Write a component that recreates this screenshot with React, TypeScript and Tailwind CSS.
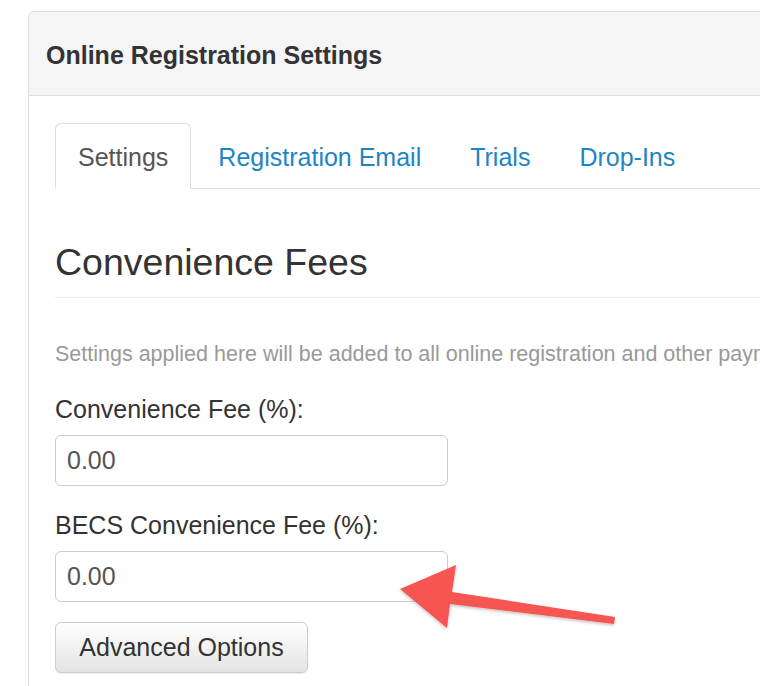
export default function App() {
  const tabs = ['Registration Email', 'Trials', 'Drop-Ins'];

  return (
    <div className="relative w-[760px] h-[686px] overflow-hidden bg-white font-['Liberation_Sans',Helvetica,Arial,sans-serif]">
      <div className="pt-[11px] pl-[28px]">
        <div className="w-[820px] border border-[#dddddd] rounded-tl-[6px]">
          {/* Panel heading */}
          <div className="h-[84px] bg-[#f5f5f5] border-b border-[#dddddd] rounded-tl-[6px] flex items-center px-[17px] pt-[3px]">
            <h1 className="text-[25px] font-bold text-[#333333] leading-none">Online Registration Settings</h1>
          </div>

          {/* Panel body */}
          <div className="pl-[26px] pt-[27px] pb-[40px]">
            <ul className="flex border-b border-[#dddddd]">
              <li className="mr-[4px] -mb-px">
                <span className="h-[66px] flex items-center pt-[3px] px-[22px] border border-[#dddddd] border-b-white bg-white rounded-t-[6px] text-[25px] text-[#555555]">
                  Settings
                </span>
              </li>
              {tabs.map((t) => (
                <li key={t} className="mr-[3px] -mb-px">
                  <span className="h-[66px] flex items-center pt-[3px] px-[22px] border border-transparent text-[25px] text-[#1f84c4]">
                    {t}
                  </span>
                </li>
              ))}
            </ul>

            <div className="mt-[53px] pb-[14px] border-b border-[#eeeeee]">
              <h2 className="text-[37.5px] leading-[41px] text-[#333333]">Convenience Fees</h2>
            </div>

            <p className="mt-[41px] text-[21.5px] leading-[30px] text-[#999999] whitespace-nowrap">
              Settings applied here will be added to all online registration and other payments.
            </p>

            <label className="block mt-[25px] text-[25px] leading-[30px] text-[#333333]">Convenience Fee (%):</label>
            <div className="mt-[11px] w-[393px] h-[51px] border border-[#cccccc] rounded-[6px] flex items-center px-[11px] text-[25px] text-[#555555]">
              0.00
            </div>

            <label className="block mt-[24px] text-[25px] leading-[30px] text-[#333333]">BECS Convenience Fee (%):</label>
            <div className="mt-[11px] w-[393px] h-[51px] border border-[#cccccc] rounded-[6px] flex items-center px-[11px] text-[25px] text-[#555555]">
              0.00
            </div>

            <button className="mt-[20px] w-[253px] h-[51px] border border-[#cccccc] rounded-[6px] bg-gradient-to-b from-white to-[#e4e4e4] text-[25px] text-[#333333] shadow-[0_1px_1px_rgba(0,0,0,0.08)]">
              Advanced Options
            </button>
          </div>
        </div>
      </div>

      {/* Annotation arrow */}
      <svg className="absolute left-0 top-0 pointer-events-none" width="760" height="686" viewBox="0 0 760 686">
        <defs>
          <filter id="sh" x="-10%" y="-30%" width="120%" height="160%">
            <feDropShadow dx="0" dy="1.5" stdDeviation="1.5" floodColor="#000" floodOpacity="0.25" />
          </filter>
        </defs>
        <polygon
          points="400,589 456,565 452,592 615,617 614,624 450,604 447,628"
          fill="#f65451"
          strokeLinejoin="round"
          filter="url(#sh)"
        />
      </svg>
    </div>
  );
}
